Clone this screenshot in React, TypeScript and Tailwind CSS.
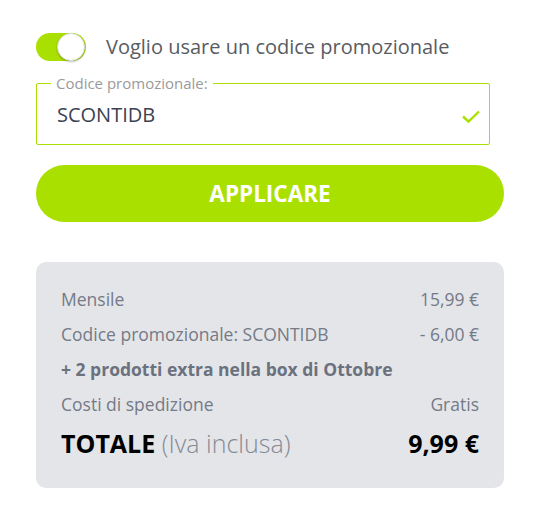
import React from "react";

export default function App() {
  return (
    <div className="w-[538px] h-[524px] bg-white" style={{ fontFamily: '"Open Sans", sans-serif' }}>
      <div className="pl-[36px] pt-[33px] w-[504px]">
        <div className="flex items-center gap-[20px]">
          <div className="relative w-[50px] h-[28px] rounded-full bg-[#aae000] flex items-center justify-end pr-[1px]">
            <div className="w-[28px] h-[28px] rounded-full bg-white border border-[#dcdcdc] shadow-[0_1px_2px_rgba(0,0,0,0.25)]" />
          </div>
          <span className="text-[20px] text-[#585c62] leading-[28px]">Voglio usare un codice promozionale</span>
        </div>

        <div className="relative mt-[22px] w-[454px] h-[62px] border border-[#aae000] rounded-[2px] flex items-center justify-between pl-[20px] pr-[8px]">
          <span className="absolute left-[14px] top-[-11px] bg-white px-[5px] text-[15px] leading-[20px] text-[#9a9a9a]">Codice promozionale:</span>
          <span className="text-[20px] text-[#3b4252] pt-[2px]">SCONTIDB</span>
          <svg width="20" height="16" viewBox="0 0 20 16" className="mt-[4px]">
            <path d="M2 8.5 L7.5 13.5 L18 3.5" fill="none" stroke="#aae000" strokeWidth="2.4" />
          </svg>
        </div>

        <button className="mt-[20px] w-[468px] h-[57px] rounded-full bg-[#aae000] text-white font-bold text-[22.5px] flex items-center justify-center">
          APPLICARE
        </button>

        <div className="mt-[40px] w-[468px] rounded-[10px] bg-[#e4e5e9] pl-[25px] pr-[25px] pt-[25px] pb-[28px] text-[17.5px] text-[#747a86]">
          <div className="flex justify-between leading-[24px]">
            <span>Mensile</span>
            <span>15,99 €</span>
          </div>
          <div className="flex justify-between leading-[24px] mt-[11px]">
            <span>Codice promozionale: SCONTIDB</span>
            <span>- 6,00 €</span>
          </div>
          <div className="leading-[24px] mt-[11px] font-bold text-[#6b717d]">+ 2 prodotti extra nella box di Ottobre</div>
          <div className="flex justify-between leading-[24px] mt-[11px]">
            <span>Costi di spedizione</span>
            <span>Gratis</span>
          </div>
          <div className="flex justify-between items-baseline leading-[34px] mt-[10px] text-[25px]">
            <span>
              <span className="font-bold text-black">TOTALE</span>{" "}
              <span className="font-light text-[#858a94]">(Iva inclusa)</span>
            </span>
            <span className="font-bold text-black">9,99 €</span>
          </div>
        </div>
      </div>
    </div>
  );
}
